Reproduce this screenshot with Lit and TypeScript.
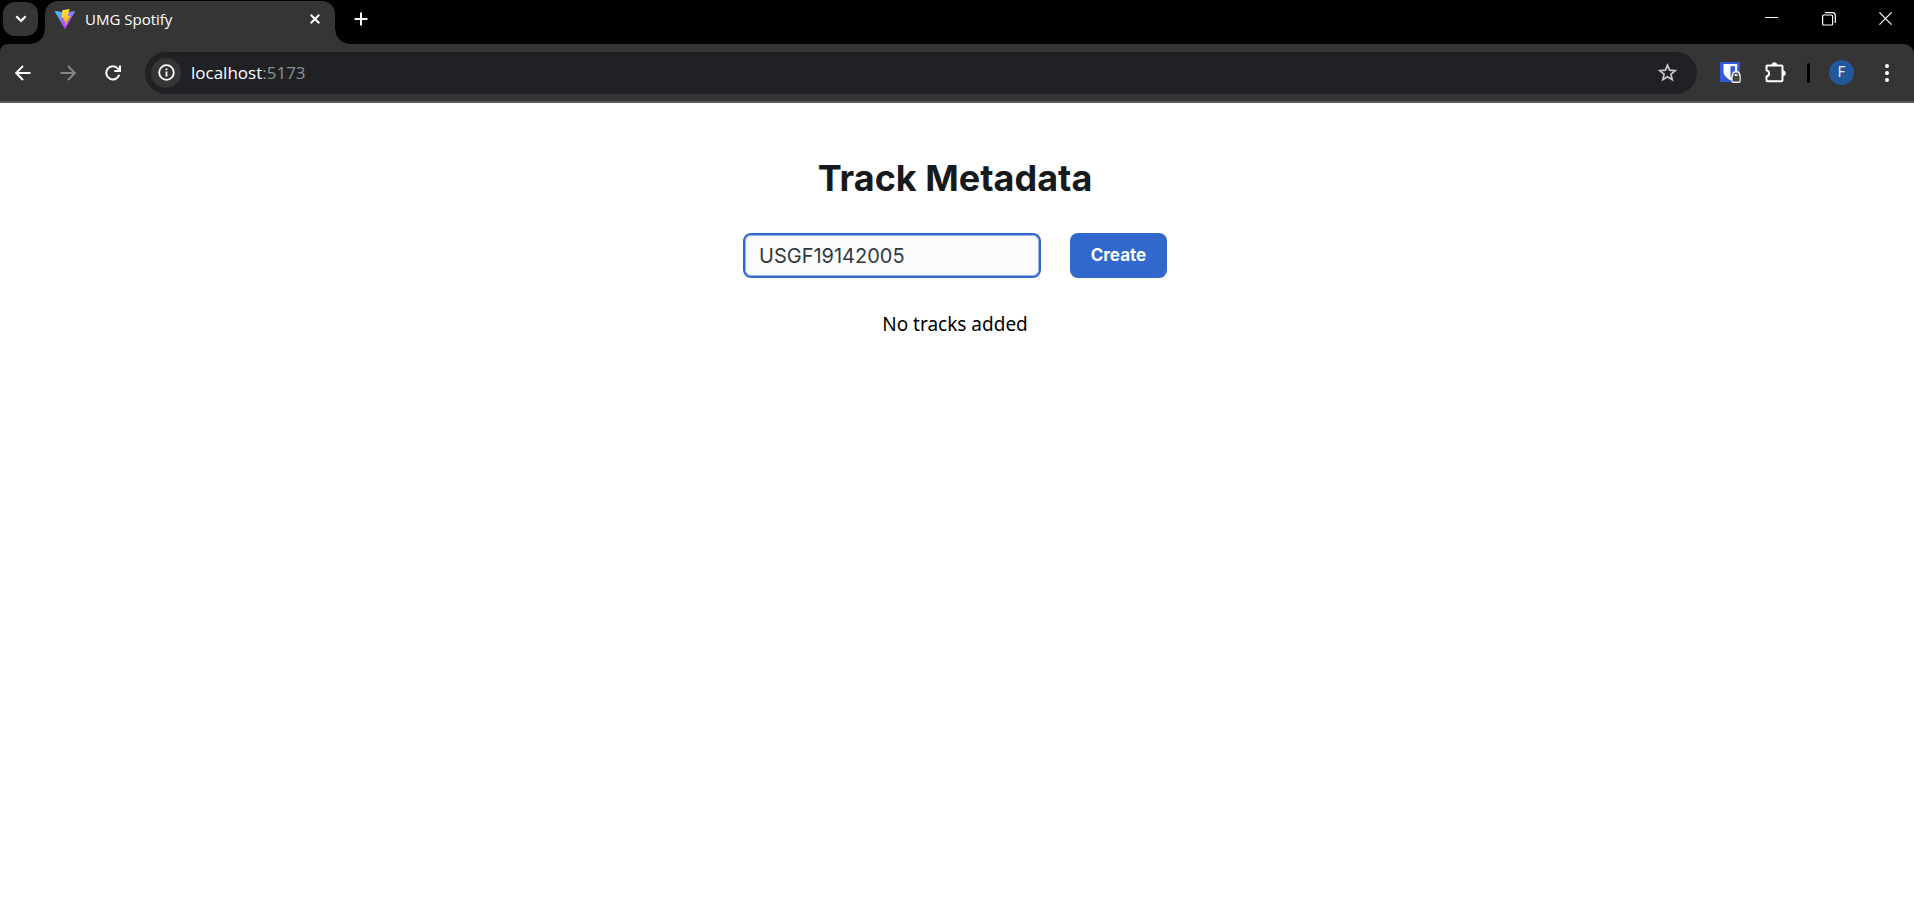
import { LitElement, html, css } from "lit";
import { customElement, state } from "lit/decorators.js";

@customElement("browser-tabs")
class BrowserTabs extends LitElement {
  static styles = css`
    :host { display: block; background: #000; }
    .strip { display: flex; align-items: center; height: 44px; }
    button { border: 0; padding: 0; margin: 0; background: none; color: #fff; display: grid; place-items: center; }
    svg { display: block; }
    .search { width: 35px; height: 34px; margin: 0 7px 6px 3px; border-radius: 12px; background: #353535; }
    .tab { position: relative; align-self: stretch; display: flex; align-items: center; gap: 10px; width: 290px; box-sizing: border-box; margin-top: 1px; padding: 0 10px 7px; border-radius: 13px 13px 0 0; background: #353535; }
    .tab::before, .tab::after { content: ""; position: absolute; bottom: 0; width: 14px; height: 14px; }
    .tab::before { right: 100%; background: radial-gradient(circle at 0 0, transparent 13px, #353535 14px); }
    .tab::after { left: 100%; background: radial-gradient(circle at 100% 0, transparent 13px, #353535 14px); }
    .title { flex: 1; font: 15px/20px "Open Sans", "Noto Sans", sans-serif; color: #fff; white-space: nowrap; }
    .close { width: 20px; height: 20px; }
    .new { width: 36px; height: 36px; margin: 0 0 6px 8px; }
    .window { display: flex; margin-left: auto; align-self: stretch; }
    .window button { width: 57px; padding-bottom: 7px; }
  `;
  render() {
    return html`<div class="strip">
      <button class="search" aria-label="Search tabs"><svg width="12" height="8" viewBox="0 0 12 8" fill="none" stroke="currentColor" stroke-width="2.2"><path d="M1.3 1.3 6 6l4.7-4.7" /></svg></button>
      <div class="tab">
        <svg width="20" height="20" viewBox="0 0 20 20">
          <defs>
            <linearGradient id="a" x1="0" y1="0" x2="0.6" y2="0.9"><stop stop-color="#41d1ff" /><stop offset="1" stop-color="#bd34fe" /></linearGradient>
            <linearGradient id="b" x1="0.3" y1="0" x2="0.6" y2="1"><stop stop-color="#ffea83" /><stop offset="0.15" stop-color="#ffdd35" /><stop offset="1" stop-color="#ffa800" /></linearGradient>
          </defs>
          <path fill="url(#a)" d="M19.8 2.9 10.5 19.6a.6.6 0 0 1-1 0L.1 2.9a.6.6 0 0 1 .6-.9L10 3.7 19.2 2a.6.6 0 0 1 .6.9Z" />
          <path fill="url(#b)" d="M14.4 0 7.5 1.35a.3.3 0 0 0-.2.25L6.9 8.8c0 .2.2.3.3.3l1.9-.4c.2 0 .4.1.3.3l-.6 2.800c0 .2.2.4.4.3l1.200-.3c.2 0 .4.1.3.3l-.9 4.300c0 .3.300.400.500.200l5-9.600c.1-.2 0-.4-.3-.4l-2 .4c-.2 0-.3-.1-.3-.3L14.700.3c0-.2-.1-.3-.3-.3Z" />
        </svg>
        <span class="title">UMG Spotify</span>
        <button class="close" aria-label="Close tab"><svg width="10" height="10" viewBox="0 0 10 10" stroke="currentColor" stroke-width="2"><path d="m.7.7 8.600 8.600M9.300.7.7 9.300" /></svg></button>
      </div>
      <button class="new" aria-label="New tab"><svg width="14" height="14" viewBox="0 0 14 14" stroke="currentColor" stroke-width="2"><path d="M7 .5v13M.5 7h13" /></svg></button>
      <div class="window">
        <button aria-label="Minimize"><svg width="13" height="13" viewBox="0 0 13 13"><path fill="currentColor" d="M0 5h13v1H0z" /></svg></button>
        <button aria-label="Restore"><svg width="14" height="14" viewBox="0 0 14 14" fill="none" stroke="currentColor" stroke-width="1.2"><rect x=".6" y="3" width="10" height="10" rx="1" /><path d="M3 .7h7.500A2.800 2.800 0 0 1 13.300 3.500V11" /></svg></button>
        <button aria-label="Close"><svg width="13" height="13" viewBox="0 0 13 13" stroke="currentColor" stroke-width="1.2"><path d="m.4.4 12.200 12.200M12.600.4.4 12.600" /></svg></button>
      </div>
    </div>`;
  }
}

@customElement("browser-toolbar")
class BrowserToolbar extends LitElement {
  static styles = css`
    :host { display: block; background: #000; }
    .bar { display: flex; align-items: center; height: 59px; box-sizing: border-box; border-bottom: 2px solid #5c5c5c; border-radius: 8px 10px 0 0; background: #353535; }
    button { border: 0; padding: 0; margin: 0; background: none; color: #fff; display: grid; place-items: center; width: 45px; height: 42px; flex: none; }
    button:disabled { color: #858585; }
    svg { display: block; }
    .nav { display: flex; padding-right: 10px; }
    .address { flex: 1; min-width: 0; display: flex; align-items: center; height: 42px; padding: 0 7px 0 6px; box-sizing: border-box; border-radius: 21px; background: #202124; color: #8f9194; font: 17px/24px "Open Sans", "Noto Sans", sans-serif; }
    .address .info { width: 30px; height: 30px; border-radius: 50%; background: #353535; margin-right: 10px; }
    .url { flex: 1; }
    .host { color: #fff; }
    .address .star { color: #c7c7c7; }
    .tools { display: flex; align-items: center; padding: 0 5px 0 11px; }
    .rule { width: 3px; height: 20px; border-radius: 2px; background: #000; margin: 0 9px; }
    .avatar { width: 25px; height: 25px; border-radius: 50%; background: #22579b; font: 14px/25px Roboto, sans-serif; display: block; text-align: center; color: #e4ecf7; }
  `;
  render() {
    return html`<div class="bar">
      <div class="nav">
        <button aria-label="Back"><svg width="16" height="16" viewBox="0 0 16 16" fill="none" stroke="currentColor" stroke-width="1.9"><path d="M15.500 8H1.500M8 1 1.200 8 8 15" /></svg></button>
        <button aria-label="Forward" disabled><svg width="16" height="16" viewBox="0 0 16 16" fill="none" stroke="currentColor" stroke-width="1.9"><path d="M.5 8h14M8 1l6.800 7L8 15" /></svg></button>
        <button aria-label="Reload"><svg width="16" height="16" viewBox="0 0 16 16" fill="none" stroke="currentColor" stroke-width="2"><path d="M14.200 9.800A6.600 6.600 0 1 1 13 3.700L14.500 5.500" /><path d="M15 .4V6H9.300" /></svg></button>
      </div>
      <div class="address">
        <button class="info" aria-label="View site information"><svg width="17" height="17" viewBox="0 0 17 17" fill="none" stroke="currentColor" stroke-width="1.8"><circle cx="8.500" cy="8.500" r="7.300" /><path d="M8.500 7.600v5M8.500 4.400v1.900" /></svg></button>
        <span class="url"><span class="host">localhost</span>:5173</span>
        <button class="star" aria-label="Bookmark this tab"><svg width="19" height="19" viewBox="0 0 19 19" fill="none" stroke="currentColor" stroke-width="1.7"><path d="m9.500 2.200 2.100 5 5.500.500-4.200 3.600 1.300 5.400-4.700-2.900-4.700 2.900 1.300-5.400L1.900 7.700l5.500-.5z" /></svg></button>
      </div>
      <div class="tools">
        <button aria-label="Password manager"><svg width="21" height="21" viewBox="0 0 21 21">
          <rect width="20" height="20" rx="1" fill="#3159dc" />
          <path d="M3.500 2h13.700v7.500c0 4-3.300 6.700-6.800 8.700-3.600-2-6.900-4.700-6.900-8.700z" fill="#fff" />
          <path d="M10.500 4.300h4.500V10c0 2.400-2 4.100-4.500 5.500z" fill="#3159dc" />
          <path d="M13.600 14.200v-1a2.900 2.900 0 0 1 5.800 0v1" transform="translate(-.4)" fill="none" stroke="#eee" stroke-width="3" />
          <rect x="11.300" y="12.700" width="9.500" height="8.300" rx="2" fill="#eee" />
          <path d="M13.900 14.500v-1.200a2.200 2.200 0 0 1 4.400 0v1.200" fill="none" stroke="#444" stroke-width="1.3" />
          <rect x="12.600" y="14" width="7" height="5.500" rx="1" fill="#444" />
        </svg></button>
        <button aria-label="Extensions"><svg width="21" height="21" viewBox="0 0 21 21"><path fill="none" stroke="currentColor" stroke-width="2" stroke-linejoin="round" d="M2.500 3.500h14q1 0 1 1v13.800q0 1-1 1h-14q-1 0-1-1v-3.800q2.600-.8 2.600-3.100T1.500 8.300V4.500q0-1 1-1z" /><path fill="currentColor" d="M6.700 3a2.700 2.700 0 0 1 5.400 0zM18 8.600a2.700 2.700 0 0 1 0 5.400z" /></svg></button>
        <div class="rule"></div>
        <button aria-label="Profile"><span class="avatar">F</span></button>
        <button aria-label="Menu"><svg width="4" height="18" viewBox="0 0 4 18" fill="currentColor"><circle cx="2" cy="2" r="2" /><circle cx="2" cy="9" r="2" /><circle cx="2" cy="16" r="2" /></svg></button>
      </div>
    </div>`;
  }
}

@customElement("app-root")
class AppRoot extends LitElement {
  static styles = css`
    :host { display: block; min-height: 100vh; background: #fff; }
    main { display: flex; flex-direction: column; align-items: center; gap: 30px; padding: 50px 4px 50px 0; }
    h1 { margin: 0; font: 700 36px/50px Inter, sans-serif; color: #171a1c; }
    form { display: flex; gap: 29px; }
    input { width: 298px; height: 45px; box-sizing: border-box; border: 2px solid #3068cb; box-shadow: inset 0 0 0 1px #95b3e5; border-radius: 8px; padding: 0 14px; background: #fbfcfe; color: #32383e; font: 20px/30px Inter, sans-serif; outline: none; }
    form button { width: 97px; height: 45px; border: 0; padding: 0 0 1px; border-radius: 8px; background: #3068cb; color: #fff; font: 700 17px/26px Inter, sans-serif; }
    p { margin: 0; font: 19px/32px "Noto Sans", sans-serif; color: #000; }
  `;
  @state() code = "USGF19142005";
  render() {
    return html`<browser-tabs></browser-tabs>
      <browser-toolbar></browser-toolbar>
      <main>
        <h1>Track Metadata</h1>
        <form @submit=${(e: Event) => e.preventDefault()}>
          <input type="text" aria-label="ISRC" .value=${this.code} @input=${(e: Event) => (this.code = (e.target as HTMLInputElement).value)} />
          <button type="submit">Create</button>
        </form>
        <p>No tracks added</p>
      </main>`;
  }
}
